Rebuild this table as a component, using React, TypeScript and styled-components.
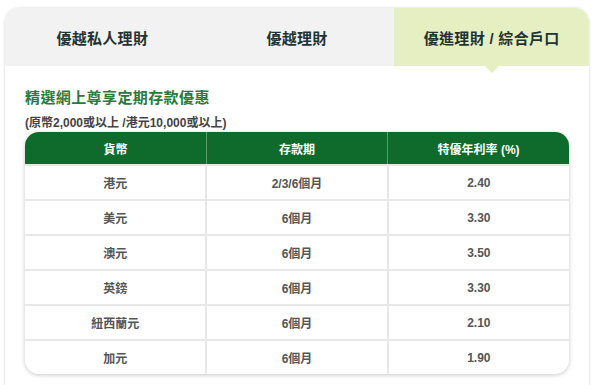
import React from "react";
import styled, { createGlobalStyle } from "styled-components";

const Global = createGlobalStyle`
  html, body { margin: 0; padding: 0; background: #ffffff; }
  body { font-family: "Liberation Sans", Arial, "Noto Sans CJK TC", sans-serif; }
`;

const Page = styled.div`
  padding: 8px 11px 0 5px;
  height: 377px;
  overflow: hidden;
`;

const Card = styled.div`
  width: 584px;
  border-radius: 15px 15px 0 0;
  box-shadow: 0 0 3px rgba(0, 0, 0, 0.18);
  background: #fff;
  height: 400px;
`;

const Tabs = styled.div`
  display: grid;
  grid-template-columns: repeat(3, 1fr);
  height: 58px;
  border-radius: 15px 15px 0 0;
`;

const Tab = styled.div<{ $active?: boolean; $first?: boolean; $last?: boolean }>`
  position: relative;
  display: flex;
  align-items: center;
  justify-content: center;
  font-size: 15px;
  font-weight: bold;
  color: #1f3333;
  background: ${(p) => (p.$active ? "#e6efc2" : "#f2f2f2")};
  border-top-left-radius: ${(p) => (p.$first ? "15px" : "0")};
  border-top-right-radius: ${(p) => (p.$last ? "15px" : "0")};
  letter-spacing: 0.3px;
  ${(p) =>
    p.$active &&
    `
    &::after {
      content: "";
      position: absolute;
      left: 50%;
      bottom: -7px;
      margin-left: -7px;
      border-left: 7px solid transparent;
      border-right: 7px solid transparent;
      border-top: 7px solid #e6efc2;
    }
  `}
`;

const Body = styled.div`
  padding: 22px 20px 0 20px;
`;

const Title = styled.div`
  font-size: 15px;
  font-weight: bold;
  color: #2a7a3a;
  line-height: 20px;
  letter-spacing: 0.4px;
`;

const Sub = styled.div`
  margin-top: 7px;
  font-size: 12px;
  font-weight: bold;
  color: #444;
  line-height: 16px;
`;

const TableWrap = styled.div`
  margin-top: 1px;
  border-radius: 14px;
  overflow: hidden;
  box-shadow: 0 1px 4px rgba(0, 0, 0, 0.22);
  background: #fff;
`;

const Table = styled.table`
  width: 100%;
  border-collapse: collapse;
  table-layout: fixed;
`;

const Th = styled.th`
  background: #0f6b2b;
  color: #fff;
  font-size: 12px;
  font-weight: bold;
  height: 32px;
  padding: 0;
  text-align: center;
  border-left: 1.5px solid #5f9a6e;
  &:first-child { border-left: none; }
`;

const Td = styled.td`
  height: 33px;
  padding: 0;
  text-align: center;
  font-size: 12px;
  font-weight: bold;
  color: #555;
  border-left: 2px solid #e8e8e8;
  border-top: 2px solid #e8e8e8;
  &:first-child { border-left: none; }
`;

const rows = [
  ["港元", "2/3/6個月", "2.40"],
  ["美元", "6個月", "3.30"],
  ["澳元", "6個月", "3.50"],
  ["英鎊", "6個月", "3.30"],
  ["紐西蘭元", "6個月", "2.10"],
  ["加元", "6個月", "1.90"],
];

export default function App() {
  return (
    <>
      <Global />
      <Page>
        <Card>
          <Tabs>
            <Tab $first>優越私人理財</Tab>
            <Tab>優越理財</Tab>
            <Tab $active $last>優進理財 / 綜合戶口</Tab>
          </Tabs>
          <Body>
            <Title>精選網上尊享定期存款優惠</Title>
            <Sub>(原幣2,000或以上 /港元10,000或以上)</Sub>
            <TableWrap>
              <Table>
                <thead>
                  <tr>
                    <Th>貨幣</Th>
                    <Th>存款期</Th>
                    <Th>特優年利率 (%)</Th>
                  </tr>
                </thead>
                <tbody>
                  {rows.map((r) => (
                    <tr key={r[0]}>
                      {r.map((c, i) => (
                        <Td key={i}>{c}</Td>
                      ))}
                    </tr>
                  ))}
                </tbody>
              </Table>
            </TableWrap>
          </Body>
        </Card>
      </Page>
    </>
  );
}
